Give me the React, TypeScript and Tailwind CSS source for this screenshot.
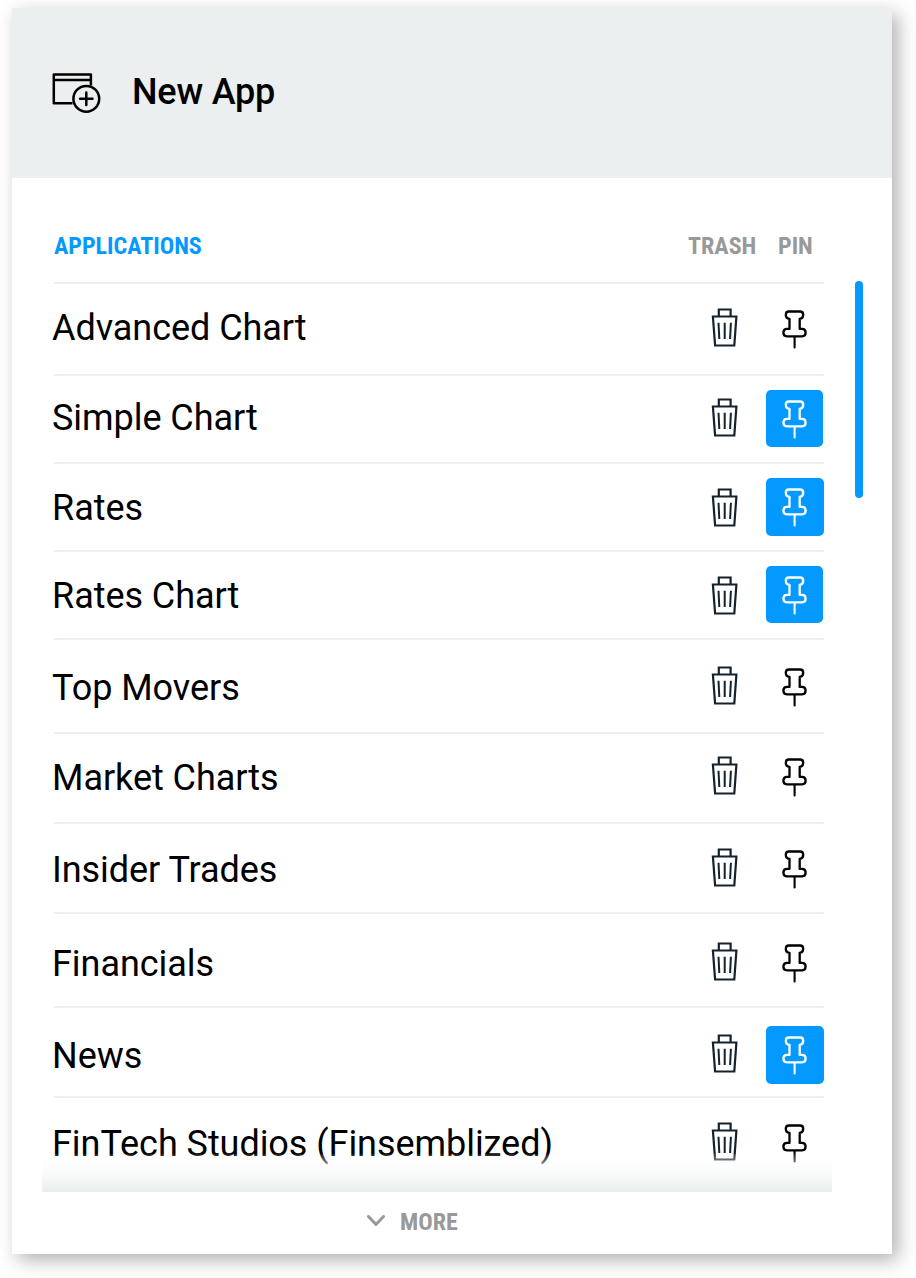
import React from "react";

type Row = {
  name: string;
  pinned?: boolean;
  height: string;
  label: string;
  trash: string;
  pin: string;
};

const rows: Row[] = [
  { name: "Advanced Chart", height: "h-[92px]", label: "mt-[23px]", trash: "mt-[24px]", pin: "mt-[16px] h-[58px] w-[58px]" },
  { name: "Simple Chart", pinned: true, height: "h-[88px]", label: "mt-[21px]", trash: "mt-[22px]", pin: "mt-[14px] h-[57px] w-[57px]" },
  { name: "Rates", pinned: true, height: "h-[88px]", label: "mt-[23px]", trash: "mt-[24px]", pin: "mt-[14px] h-[58px] w-[58px]" },
  { name: "Rates Chart", pinned: true, height: "h-[88px]", label: "mt-[23px]", trash: "mt-[24px]", pin: "mt-[14px] h-[57px] w-[57px]" },
  { name: "Top Movers", height: "h-[94px]", label: "mt-[27px]", trash: "mt-[26px]", pin: "mt-[18px] h-[58px] w-[58px]" },
  { name: "Market Charts", height: "h-[90px]", label: "mt-[23px]", trash: "mt-[22px]", pin: "mt-[14px] h-[58px] w-[58px]" },
  { name: "Insider Trades", height: "h-[90px]", label: "mt-[25px]", trash: "mt-[24px]", pin: "mt-[16px] h-[58px] w-[58px]" },
  { name: "Financials", height: "h-[94px]", label: "mt-[29px]", trash: "mt-[28px]", pin: "mt-[20px] h-[58px] w-[58px]" },
  { name: "News", pinned: true, height: "h-[90px]", label: "mt-[27px]", trash: "mt-[26px]", pin: "mt-[18px] h-[58px] w-[58px]" },
  { name: "FinTech Studios (Finsemblized)", height: "h-[96px]", label: "mt-[25px]", trash: "mt-[24px]", pin: "mt-[16px] h-[58px] w-[58px]" },
];

function NewAppIcon() {
  return (
    <svg width="50" height="42" viewBox="0 0 50 42" fill="none" stroke="#000" strokeWidth="2.5">
      <path d="M20.5 31.2H1.8V2.5H38.9V13.5M1.8 8.1H38.9" strokeLinejoin="round" />
      <circle cx="34.3" cy="26.8" r="12.9" />
      <path d="M34.3 20.6V33M28.1 26.8H40.5" strokeLinecap="round" />
    </svg>
  );
}

function TrashIcon() {
  return (
    <svg width="28" height="40" viewBox="0 0 28 40" fill="none" stroke="#14222e" strokeWidth="2.2">
      <path d="M7.8 8.5V1.5H19.6V8.5M1.9 8.5H25.4L23.3 37.5H4.1Z" />
      <path d="M7.5 14.7L8.3 31M13.7 14.7V31M19.9 14.7L19.1 31" strokeWidth="2" />
    </svg>
  );
}

function PinIcon() {
  return (
    <svg width="28" height="40" viewBox="0 0 28 40" fill="none" stroke="currentColor" strokeWidth="2.3" strokeLinecap="round" strokeLinejoin="round">
      <path d="M7.9 1.5H19.1C21.2 1.5 22.2 2.8 22.2 4.8C22.2 7.2 20.9 8.6 18.7 8.9V18.9H21.1C23.5 18.9 24.6 20.2 24.6 22.6C24.6 25 23.5 26.3 21.1 26.3H5.9C3.5 26.3 2.4 25 2.4 22.6C2.4 20.2 3.5 18.9 5.9 18.9H8.5V8.9C6.1 8.6 4.8 7.2 4.8 4.8C4.8 2.8 5.8 1.5 7.9 1.5Z" />
      <path d="M13.6 27V37.4" strokeWidth="2.1" />
    </svg>
  );
}

export default function App() {
  return (
    <div className="h-[1278px] w-[916px] overflow-hidden bg-white pl-3 pt-2 font-['Roboto',sans-serif]">
      <main className="flex h-[1246px] w-[880px] flex-col bg-white shadow-[6px_6px_18px_rgba(0,0,0,0.31)]">
        <header className="flex h-[170px] items-center bg-[#ebefef] pl-10">
          <NewAppIcon />
          <h1 className="-mt-[2px] ml-[30px] text-[36px] font-medium leading-[42px] tracking-[-0.2px]">New App</h1>
        </header>

        <div className="flex h-[104px] pl-[42px] pr-[68px] pt-[54px] font-['Roboto_Condensed'] text-[24px] font-bold leading-7 text-[#999]">
          <h2 className="flex-1 text-[#0399ff]">APPLICATIONS</h2>
          <span className="w-[90px]">TRASH</span>
          <span className="w-[46px]">PIN</span>
        </div>

        <div className="relative flex h-[910px] pl-[42px]">
          <ul className="w-[770px]">
            {rows.map((r) => (
              <li key={r.name} className={`flex items-start border-t-2 border-[#ebefef] ${r.height}`}>
                <span className={`-ml-[2px] w-[659px] whitespace-nowrap text-[36px] leading-[42px] tracking-[-0.05px] ${r.label}`}>{r.name}</span>
                <button className={r.trash} aria-label="Trash">
                  <TrashIcon />
                </button>
                <button
                  aria-label="Pin"
                  className={`ml-[27px] shrink-0 rounded-[5px] pb-2 pl-[15px] pt-[10px] ${r.pin} ${r.pinned ? "bg-[#0399ff] text-white" : "text-black"}`}
                >
                  <PinIcon />
                </button>
              </li>
            ))}
          </ul>
          <div className="-mt-px ml-[31px] h-[217px] w-2 rounded-full bg-[#0399ff]" />
          <div className="pointer-events-none absolute bottom-0 left-[30px] h-[38px] w-[790px] bg-linear-to-b from-white/10 via-[#fafbfb]/90 to-[#e9edee]" />
        </div>

        <button className="flex flex-1 items-center pb-[2px] pl-[355px] font-['Roboto_Condensed'] text-[24px] font-bold leading-7 text-[#999]">
          <svg className="-mt-[3px]" width="18" height="12" viewBox="0 0 18 12" fill="none" stroke="#999" strokeWidth="3" strokeLinecap="round" strokeLinejoin="round">
            <path d="M1.5 1.5L9 9.5L16.5 1.5" />
          </svg>
          <span className="ml-[15px]">MORE</span>
        </button>
      </main>
    </div>
  );
}
